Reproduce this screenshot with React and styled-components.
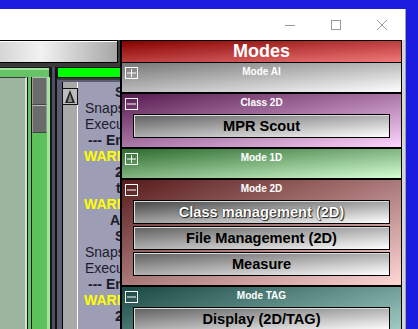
import React from 'react';
import styled, { createGlobalStyle } from 'styled-components';

const GlobalStyle = createGlobalStyle`
  html, body { margin: 0; padding: 0; background: #1c1ce0; overflow: hidden; }
  body { font-family: "Liberation Sans", Arial, sans-serif; }
`

const Desktop = styled.div`
  width: 418px;
  height: 329px;
  padding-top: 9px;
  box-sizing: border-box;
  overflow: hidden;
`

const Window = styled.div`
  width: 406px;
  height: 320px;
  border-right: 1px solid #a0a0a0;
  box-sizing: border-box;
  display: flex;
  flex-direction: column;
  background: #3a3a3a;
  overflow: hidden;
`

const TitleBar = styled.div`
  height: 31px;
  flex: none;
  background: #fff;
  display: flex;
  justify-content: flex-end;
`

const CaptionButton = styled.div`
  width: 46px;
  height: 31px;
  display: flex;
  align-items: center;
  justify-content: center;
  color: #999;
`

const Body = styled.div`
  flex: 1;
  min-height: 0;
  display: flex;
`

const LeftPane = styled.div`
  width: 120px;
  flex: none;
  display: flex;
  flex-direction: column;
`

const Toolbar = styled.div`
  height: 23px;
  margin-right: 2px;
  box-sizing: border-box;
  border: 1px solid #000;
  border-left: none;
  box-shadow: inset 0 1px 0 #fff;
  background: linear-gradient(to right, #d6d6d6, #f2f2f2 35%, #a6a6a6);
`

const LowerRow = styled.div`
  flex: 1;
  min-height: 0;
  margin-top: 4px;
  display: flex;
`

const GreenPanel = styled.div`
  width: 52px;
  flex: none;
  box-sizing: border-box;
  border-top: 1px solid #1a1a1a;
  border-right: 3px solid #161616;
  background: #66c466;
  box-shadow: inset 0 2px 0 #9fe59f;
  padding-top: 9px;
  display: flex;
`

const ImageArea = styled.div`
  width: 25px;
  flex: none;
  background: #9db49d;
  border-top: 1px solid #3c3c3c;
  border-right: 2px solid #d2e2d2;
  box-shadow: 1px 0 0 #111;
`

const ScrollCol = styled.div`
  width: 15px;
  flex: none;
  margin-left: 4px;
  border-left: 1px solid #1a1a1a;
  border-right: 3px solid #a0e4a0;
  background: #5ec15e;
`

const Thumb = styled.div`
  height: 28px;
  box-sizing: border-box;
  background: #6b6b6b;
  border: 1px solid #999;
  border-top-color: #bbb;
  border-bottom-color: #444;
`

const LogColumn = styled.div`
  flex: 1;
  min-width: 0;
  display: flex;
  flex-direction: column;
  border-left: 3px solid #4e4e60;
  box-shadow: inset 2px 0 0 #111;
  padding-left: 2px;
`

const Progress = styled.div`
  height: 11px;
  flex: none;
  box-sizing: border-box;
  border: 1px solid #111;
  border-right: none;
  background: #00ff00;
`

const LogFrame = styled.div`
  flex: 1;
  min-height: 0;
  margin-top: 2px;
  display: flex;
  border-left: 5px solid #5c5c70;
  border-top: 2px solid #5c5c70;
  background: #9d9db5;
`

const ScrollTrack = styled.div`
  width: 14px;
  flex: none;
  border-left: 1px solid #000;
  border-right: 1px solid #fff;
  background: #a9a9a9;
  padding-top: 6px;
`

const UpButton = styled.div`
  width: 16px;
  height: 17px;
  margin-left: -1px;
  box-sizing: border-box;
  border: 1px solid #111;
  background: #bdbdbd;
  display: flex;
  align-items: center;
  justify-content: center;
`

const LogText = styled.div`
  flex: 1;
  min-width: 0;
  overflow: hidden;
  padding-top: 2px;
  font-size: 14px;
  line-height: 16px;
  white-space: nowrap;
`

const LogLine = styled.div`
  padding-left: ${({ $indent }) => $indent}px;
  font-weight: ${({ $bold, $warn }) => ($bold || $warn ? 'bold' : 'normal')};
  color: ${({ $warn }) => ($warn ? '#ffff00' : '#1c1c2c')};
`

const ModesPanel = styled.div`
  width: 282px;
  flex: none;
  box-sizing: border-box;
  background: #000;
  padding: 1px 1px 0 2px;
  display: flex;
  flex-direction: column;
  overflow: hidden;
`

const WindowEdge = styled.div`
  width: 3px;
  flex: none;
  background: #d6d6d6;
`

const ModesHeader = styled.div`
  height: 21px;
  flex: none;
  margin-bottom: 1px;
  background: linear-gradient(to bottom right, #850000, #f27a7a);
  color: #fff;
  font-weight: bold;
  font-size: 18px;
  line-height: 21px;
  text-align: center;
`

const Section = styled.div`
  flex: none;
  min-height: 29px;
  box-sizing: border-box;
  background: linear-gradient(to bottom right, ${({ $from }) => $from}, ${({ $to }) => $to});
  & + & { margin-top: 2px; }
`

const SectionHeader = styled.div`
  height: 20px;
  box-sizing: border-box;
  padding: 4px 3px 0;
  display: grid;
  grid-template-columns: 1fr auto 1fr;
  align-items: start;
`

const SectionTitle = styled.div`
  color: #fff;
  font-weight: bold;
  font-size: 10px;
  line-height: 12px;
  margin-top: -1px;
`

const SectionBody = styled.div`
  padding: 0 11px 9px;
`

const ModeButton = styled.div`
  height: 24px;
  box-sizing: border-box;
  border: 1px solid #000;
  box-shadow: inset 1px 1px 0 #dcdcdc;
  background: linear-gradient(to bottom right, ${({ $active }) => ($active ? '#444' : '#5e5e5e')}, #fff);
  font-weight: bold;
  font-size: 14.6px;
  line-height: 22px;
  text-align: center;
  color: ${({ $active }) => ($active ? '#fff' : '#000')};
  text-shadow: ${({ $active }) => ($active ? '0 0 1px #000, 1px 1px 1px #222' : 'none')};
  & + & { margin-top: 2px; }
`

const ToggleBox = ({ open }) => (
  <svg width="13" height="12" viewBox="0 0 13 12">
    <rect x="0.5" y="0.5" width="12" height="11" fill="none" stroke="#fff" />
    <line x1="2" y1="6" x2="11" y2="6" stroke="#fff" />
    {!open && <line x1="6.5" y1="2" x2="6.5" y2="10" stroke="#fff" />}
  </svg>
)

const logLines = [
  { text: 'Series 1', indent: 37, bold: true },
  { text: 'Snapshot saved', indent: 7 },
  { text: 'Execution finished', indent: 7 },
  { text: '--- End ---', indent: 10, bold: true },
  { text: 'WARNING', indent: 6, warn: true },
  { text: '2D view', indent: 37, bold: true },
  { text: 'tag', indent: 38, bold: true },
  { text: 'WARNING', indent: 6, warn: true },
  { text: 'Acquisition', indent: 32, bold: true },
  { text: 'Series 2', indent: 37, bold: true },
  { text: 'Snapshot saved', indent: 7 },
  { text: 'Execution finished', indent: 7 },
  { text: '--- End ---', indent: 10, bold: true },
  { text: 'WARNING', indent: 6, warn: true },
  { text: '2D view', indent: 37, bold: true },
]

const sections = [
  { title: 'Mode AI', from: '#767676', to: '#ffffff', buttons: [] },
  { title: 'Class 2D', from: '#561a4e', to: '#ffd4ff', buttons: [{ label: 'MPR Scout' }] },
  { title: 'Mode 1D', from: '#2c6a2c', to: '#d6ffd6', buttons: [] },
  {
    title: 'Mode 2D', from: '#561b1b', to: '#ffd6d6',
    buttons: [{ label: 'Class management (2D)', active: true }, { label: 'File Management (2D)' }, { label: 'Measure' }],
  },
  { title: 'Mode TAG', from: '#184640', to: '#c8f4ee', buttons: [{ label: 'Display (2D/TAG)' }, { label: 'Edit TAG' }] },
]

export default function App() {
  return (
    <Desktop>
      <GlobalStyle />
      <Window>
        <TitleBar>
          <CaptionButton>
            <svg width="10" height="10" viewBox="0 0 10 10"><line x1="0" y1="5.5" x2="10" y2="5.5" stroke="currentColor" /></svg>
          </CaptionButton>
          <CaptionButton>
            <svg width="10" height="10" viewBox="0 0 10 10"><rect x="0.5" y="0.5" width="9" height="9" fill="none" stroke="currentColor" /></svg>
          </CaptionButton>
          <CaptionButton>
            <svg width="10" height="10" viewBox="0 0 10 10"><path d="M0 0L10 10M10 0L0 10" stroke="currentColor" /></svg>
          </CaptionButton>
        </TitleBar>
        <Body>
          <LeftPane>
            <Toolbar />
            <LowerRow>
              <GreenPanel>
                <ImageArea />
                <ScrollCol>
                  <Thumb />
                  <Thumb />
                </ScrollCol>
              </GreenPanel>
              <LogColumn>
                <Progress />
                <LogFrame>
                  <ScrollTrack>
                    <UpButton>
                      <svg width="10" height="13" viewBox="0 0 10 13">
                        <path d="M5 0L10 13H0Z" fill="#222" />
                        <path d="M5 4L7.5 12H2.5Z" fill="#888" />
                      </svg>
                    </UpButton>
                  </ScrollTrack>
                  <LogText>
                    {logLines.map((l, i) => (
                      <LogLine key={i} $indent={l.indent} $bold={l.bold} $warn={l.warn}>{l.text}</LogLine>
                    ))}
                  </LogText>
                </LogFrame>
              </LogColumn>
            </LowerRow>
          </LeftPane>
          <ModesPanel>
            <ModesHeader>Modes</ModesHeader>
            {sections.map((s) => (
              <Section key={s.title} $from={s.from} $to={s.to}>
                <SectionHeader>
                  <ToggleBox open={s.buttons.length > 0} />
                  <SectionTitle>{s.title}</SectionTitle>
                </SectionHeader>
                {s.buttons.length > 0 && (
                  <SectionBody>
                    {s.buttons.map((b) => (
                      <ModeButton key={b.label} $active={b.active}>{b.label}</ModeButton>
                    ))}
                  </SectionBody>
                )}
              </Section>
            ))}
          </ModesPanel>
          <WindowEdge />
        </Body>
      </Window>
    </Desktop>
  )
}
